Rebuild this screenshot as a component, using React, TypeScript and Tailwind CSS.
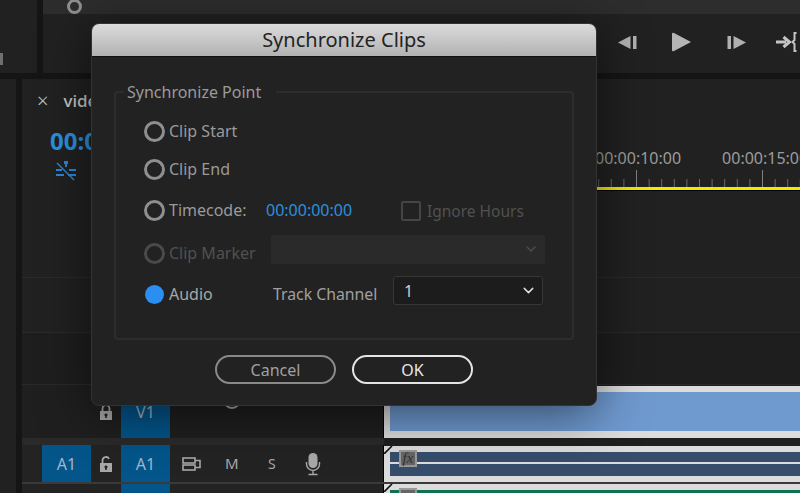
import { ChevronDown } from 'lucide-react';

const font = { sans: "font-['Noto_Sans',sans-serif]" };

const Radio = ({ dim }: { dim?: boolean }) => (
  <span className={`w-[21px] h-[21px] rounded-full border-[3px] shrink-0 ${dim ? 'border-[#4a4a4a]' : 'border-[#8f8f8f]'}`} />
);

const LockIcon = ({ open }: { open?: boolean }) => (
  <svg width="14" height="16" viewBox="0 0 14 16" className="shrink-0">
    <path d={open ? 'M3.5 7V4.5a3.5 3.5 0 0 1 6.6-1.6' : 'M3.5 7V4.5a3.5 3.5 0 0 1 7 0V7'} fill="none" stroke="#a8a8a8" strokeWidth="1.8" />
    <path fillRule="evenodd" d="M1 7h12v9H1zM7 9.5a1.5 1.5 0 0 0-.8 2.8V14h1.6v-1.7A1.5 1.5 0 0 0 7 9.5z" fill="#a8a8a8" />
  </svg>
);

const OutputIcon = () => (
  <svg width="19" height="14" viewBox="0 0 19 14" fill="none" stroke="#a8a8a8" strokeWidth="1.6" className="shrink-0">
    <rect x="1" y="1" width="12" height="5" />
    <rect x="1" y="8" width="12" height="5" />
    <path d="M13 3.5h5v7h-5" />
  </svg>
);

const MicIcon = () => (
  <svg width="16" height="24" viewBox="0 0 16 24" className="shrink-0">
    <rect x="3.5" y="1" width="9" height="15" rx="4.5" fill="#a8a8a8" />
    <path d="M1.5 10v2a6.5 6.5 0 0 0 13 0v-2M8 18.5V22M3.5 22.5h9" fill="none" stroke="#a8a8a8" strokeWidth="1.4" />
  </svg>
);

const Ruler = () => {
  const ticks = Array.from({ length: 34 }, (_, i) => i);
  return (
    <svg width="416" height="17" viewBox="0 0 416 17" className="block">
      {ticks.map((i) => {
        const x = 0.5 + i * 12.6;
        const major = i % 10 === 0;
        return <line key={i} x1={x} x2={x} y1={major ? 0 : 9} y2="17" stroke={major ? '#808080' : '#686868'} />;
      })}
    </svg>
  );
};

const TrackHead = ({ children }: { children: string }) => (
  <div className="w-[49px] h-full shrink-0 bg-[#03558a] flex items-center justify-center text-[16px] text-[#9fb8cb]">
    {children}
  </div>
);

const ClipCorner = () => (
  <svg width="9" height="8" viewBox="0 0 9 8" className="absolute left-0 top-0">
    <path d="M0 8 8 0" stroke="#111" strokeWidth="1.6" />
  </svg>
);

export default function App() {
  return (
    <div className={`relative w-[800px] h-[493px] overflow-hidden bg-[#151515] flex flex-col gap-[6px] ${font.sans}`}>
      {/* top panels */}
      <div className="h-[73px] flex gap-[6px] shrink-0">
        <div className="w-[37px] bg-[#212121] flex items-end pb-[8px]">
          <div className="w-[3px] h-[12px] bg-[#6f6f6f]" />
        </div>
        <div className="flex-1 bg-[#212121] flex flex-col">
          <div className="h-[14px] bg-[#2d2d2d] pl-[24px]">
            <div className="w-[15px] h-[15px] -mt-[1px] rounded-full border-[3px] border-[#8f8f8f] bg-[#2d2d2d]" />
          </div>
          <div className="flex-1 flex items-center justify-end pr-[1px] pb-[3px]">
            <svg width="19" height="15" viewBox="0 0 19 15" fill="#b0b0b0">
              <path d="M0 7.5 12.5 1v13z" />
              <rect x="15" y="1" width="3.5" height="13" />
            </svg>
            <svg width="19" height="20" viewBox="0 0 19 20" fill="#b4b4b4" className="ml-[35px]">
              <path d="M0 2q0-2 2-1l17 9-17 9q-2 1-2-1z" />
            </svg>
            <svg width="19" height="15" viewBox="0 0 19 15" fill="#b0b0b0" className="ml-[36px]">
              <rect x="0.5" y="1" width="3.5" height="13" />
              <path d="M6.5 1 19 7.5 6.5 14z" />
            </svg>
            <svg width="23" height="20" viewBox="0 0 23 20" fill="none" className="ml-[30px]">
              <path d="M0 10h10M7.5 5l6 5-6 5" stroke="#c4c4c4" strokeWidth="3" />
              <path d="M20.5 1h-2v7l-2 2 2 2v7h2" stroke="#c4c4c4" strokeWidth="2" />
            </svg>
          </div>
        </div>
      </div>

      {/* lower panels */}
      <div className="flex-1 flex gap-[6px] min-h-0">
        <div className="w-[16px] shrink-0 bg-[#212121]" />
        <div className="flex-1 min-w-0 bg-[#212121] flex flex-col">
          {/* header and ruler */}
          <div className="h-[198px] flex shrink-0">
            <div className="w-[361px] shrink-0 pl-[15px] pt-[13px]">
              <div className="flex items-center gap-[15px] h-[18px] text-[#c8c8c8]">
                <span className="text-[20px] leading-none font-light">×</span>
                <span className="text-[17px] font-medium">video</span>
              </div>
              <div className="ml-[13px] mt-[16px] text-[24px] leading-[30px] font-bold text-[#2b90df]">00:00</div>
              <div className="ml-[18px] mt-[5px]">
                <svg width="22" height="20" viewBox="0 0 22 20" fill="none" stroke="#2b86d6" strokeWidth="2">
                  <path d="M11 1v5M1 9h6M14 9h7M1 14h8M13 14h8" />
                  <rect x="9" y="0" width="4" height="3" fill="#2b86d6" stroke="none" />
                  <path d="M2 2l17 17" strokeWidth="1.4" />
                </svg>
              </div>
            </div>
            <div className="flex-1 min-w-0 overflow-hidden pl-[1px] flex flex-col">
              <div className="h-[68px] shrink-0" />
              <div className="flex text-[16px] leading-[22px] text-[#9c9c9c] pl-[211px] gap-[41px] whitespace-nowrap">
                <span>00:00:10:00</span>
                <span>00:00:15:00</span>
              </div>
              <div className="mt-[1px]">
                <Ruler />
              </div>
              <div className="h-[3px] bg-[#f1ea00]" />
              <div className="h-[1px] bg-black" />
            </div>
          </div>

          {/* upper video rows */}
          <div className="h-[56px] shrink-0 border-y border-[#2a2a2a]" />
          <div className="h-[52px] shrink-0 border-b border-[#2a2a2a] bg-[#1e1e1e]" />

          {/* V1 */}
          <div className="h-[53px] flex shrink-0">
            <div className="w-[362px] shrink-0 flex items-center bg-[#1f1f1f] pl-[77px] border-r border-black">
              <LockIcon />
              <div className="ml-[8px] h-full"><TrackHead>V1</TrackHead></div>
              <div className="ml-[12px] self-start mt-[6px]"><OutputIcon /></div>
              <div className="ml-[22px] self-start mt-[6px] w-[18px] h-[18px] rounded-full border-2 border-[#a8a8a8]" />
            </div>
            <div className="flex-1 border-t border-[#1f1f1f] bg-[#dcdcdc] pl-[6px] pt-[6px] pb-[7px]">
              <div className="h-full bg-[#6f9ad0]" />
            </div>
          </div>

          <div className="h-[7px] bg-[#2a2a2a] shrink-0 flex">
            <div className="flex-1" />
            <div className="w-[416px] bg-[#1f1f1f]" />
          </div>

          {/* A1 */}
          <div className="h-[37px] flex shrink-0">
            <div className="w-[362px] shrink-0 flex items-center bg-[#232323] pl-[20px] border-r border-black">
              <TrackHead>A1</TrackHead>
              <div className="ml-[8px]"><LockIcon open /></div>
              <div className="ml-[8px] h-full"><TrackHead>A1</TrackHead></div>
              <div className="ml-[12px]"><OutputIcon /></div>
              <span className="ml-[24px] w-[14px] text-[15px] text-[#a8a8a8]">M</span>
              <span className="ml-[29px] w-[9px] text-[14px] text-[#a8a8a8]">S</span>
              <div className="ml-[28px]"><MicIcon /></div>
            </div>
            <div className="relative flex-1 border-t border-[#1f1f1f] bg-[#dcdcdc] pl-[6px] pt-[6px] pb-[6px]">
              <ClipCorner />
              <div className="h-full flex flex-col gap-[2px]">
                <div className="h-[10px] bg-[#364d6c]" />
                <div className="flex-1 bg-[#364d6c]" />
              </div>
              <div className="absolute left-[15px] top-[4px] w-[18px] h-[17px] bg-[#666] border-2 border-[#999] flex items-center justify-center font-['Liberation_Serif',serif] italic text-[15px] leading-none text-[#333]">
                fx
              </div>
            </div>
          </div>

          <div className="h-[2px] bg-[#3a3a3a] shrink-0" />

          {/* A2 */}
          <div className="flex-1 flex min-h-0">
            <div className="w-[362px] shrink-0 bg-[#232323] pl-[99px] border-r border-black">
              <div className="w-[49px] h-full bg-[#03558a]" />
            </div>
            <div className="relative flex-1 bg-[#dcdcdc] pl-[6px] pt-[6px]">
              <ClipCorner />
              <div className="h-full bg-[#0e7150]" />
              <div className="absolute left-[15px] top-[4px] w-[18px] h-[17px] bg-[#666] border-2 border-[#999]" />
            </div>
          </div>
        </div>
      </div>

      {/* dialog */}
      <div className="absolute left-[91px] top-[23px] w-[506px] h-[383px] rounded-[8px] overflow-hidden bg-[#222222] border border-[#333] shadow-[0_8px_50px_rgba(0,0,0,0.55)] flex flex-col">
        <div className="h-[33px] shrink-0 bg-gradient-to-b from-[#dcdcdc] to-[#b2b2b2] border-b border-[#111] flex items-center justify-center text-[20px] text-[#232323]">
          Synchronize Clips
        </div>
        <div className="flex-1 px-[22px] pt-[24px] flex flex-col">
          <fieldset className="h-[259px] border-2 border-[#2d2d2d] rounded-[4px] pl-[28px] text-[16px] text-[#9a9a9a]">
            <legend className="ml-[-20px] px-[3px] pr-[15px] h-[22px] leading-[22px] whitespace-nowrap">
              Synchronize Point
            </legend>
            <div className="mt-[16px] h-[24px] flex items-center gap-[4px]">
              <Radio />
              <span>Clip Start</span>
            </div>
            <div className="mt-[14px] h-[24px] flex items-center gap-[4px]">
              <Radio />
              <span>Clip End</span>
            </div>
            <div className="mt-[17px] h-[24px] flex items-center">
              <Radio />
              <span className="ml-[4px] w-[97px]">Timecode:</span>
              <span className="text-[16px] text-[#2b90df] w-[135px]">00:00:00:00</span>
              <span className="w-[20px] h-[20px] mt-[2px] rounded-[2px] border-2 border-[#454545]" />
              <span className="ml-[6px] mt-[3px] text-[15.5px] text-[#515151]">Ignore Hours</span>
            </div>
            <div className="mt-[19px] h-[24px] flex items-center text-[#515151]">
              <Radio dim />
              <span className="ml-[4px] w-[102px]">Clip Marker</span>
              <div className="w-[274px] h-[29px] -mt-[8px] shrink-0 rounded-[2px] bg-[#2a2a2a] flex items-center justify-end pr-[6px]">
                <ChevronDown size={16} color="#4d4d4d" />
              </div>
            </div>
            <div className="mt-[17px] h-[24px] flex items-center">
              <span className="w-[21px] h-[21px] rounded-full bg-[#2b8ef0] shrink-0 scale-90" />
              <span className="ml-[4px] w-[104px] text-[#a8a8a8]">Audio</span>
              <span className="w-[120px] mt-[2px] text-[15.8px] text-[#a0a0a0]">Track Channel</span>
              <div className="w-[150px] h-[29px] shrink-0 -mt-[7px] rounded-[3px] bg-[#1c1c1c] border border-[#363636] flex items-center justify-between pl-[10px] pr-[5px] text-[#cfcfcf]">
                <span>1</span>
                <ChevronDown size={17} color="#e0e0e0" />
              </div>
            </div>
          </fieldset>
          <div className="mt-[15px] flex justify-center gap-[16px] text-[16px]">
            <button className="w-[121px] h-[29px] rounded-full border-2 border-[#8a8a8a] text-[#a0a0a0] leading-none">Cancel</button>
            <button className="w-[121px] h-[29px] rounded-full border-2 border-[#e4e4e4] text-[#e8e8e8] leading-none">OK</button>
          </div>
        </div>
      </div>
    </div>
  );
}
